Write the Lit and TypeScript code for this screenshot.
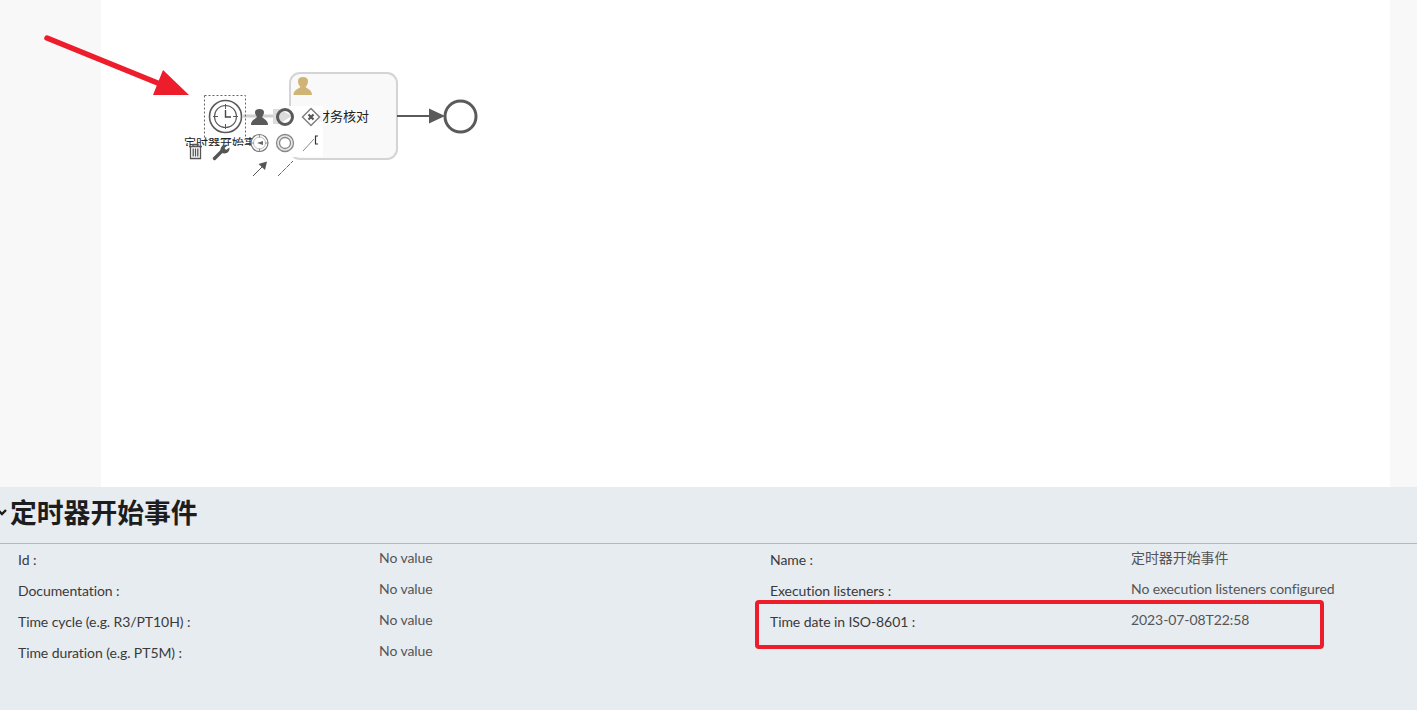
import { LitElement, html, css, svg } from "lit";
import { customElement } from "lit/decorators.js";

const LEFT = [
  ["Id :", "No value"],
  ["Documentation :", "No value"],
  ["Time cycle (e.g. R3/PT10H) :", "No value"],
  ["Time duration (e.g. PT5M) :", "No value"],
];
const RIGHT = [
  ["Name :", "定时器开始事件"],
  ["Execution listeners :", "No execution listeners configured"],
  ["Time date in ISO-8601 :", "2023-07-08T22:58"],
];

@customElement("app-root")
export class AppRoot extends LitElement {
  static styles = css`
    :host {
      display: block;
      position: relative;
      width: 1417px;
      height: 710px;
      overflow: hidden;
      font-family: Lato, "Noto Sans CJK SC", sans-serif;
      background: #f8f8f8;
    }
    .top { height: 487px; padding: 0 27px 0 101px; box-sizing: border-box; }
    .canvas { height: 100%; background: #fff; position: relative; }
    .panel { height: 223px; background: #e7ecf1; box-sizing: border-box; }
    .head {
      height: 57px;
      display: flex;
      align-items: center;
      gap: 2px;
      border-bottom: 1px solid #b3b8c6;
      box-sizing: border-box;
      padding-bottom: 6px;
    }
    .chev { width: 8px; height: 8px; flex: none; }
    h1 {
      margin: 0;
      font: 700 26.8px "Noto Sans CJK SC", Lato, sans-serif;
      line-height: 30px;
      color: #1d1d1d;
    }
    .cols { display: grid; grid-template-columns: 752px 1fr; padding: 0 0 0 18px; }
    .row {
      display: grid;
      grid-template-columns: 361px 1fr;
      height: 31px;
      font-size: 14px;
      letter-spacing: -0.08px;
      color: #4a4a4a;
    }
    .k { padding-top: 7px; line-height: 17px; color: #3a3a3a; }
    .v { padding-top: 5px; line-height: 17px; color: #555; }
    .over { position: absolute; left: 0; top: 0; pointer-events: none; }
    .lbl { font: 13px "Noto Sans CJK SC", sans-serif; fill: #222; }
    .lbl-small { font: 12px "Noto Sans CJK SC", sans-serif; fill: #222; }
  `;

  private rows(list: string[][]) {
    return html`<div class="col">
      ${list.map(([k, v]) => html`<div class="row"><div class="k">${k}</div><div class="v">${v}</div></div>`)}
    </div>`;
  }

  private diagram() {
    return svg`
      <!-- task -->
      <rect x="290" y="73" width="107" height="86" rx="10" fill="#f9f9f9" stroke="#d4d4d4" stroke-width="2"/>
      <path d="M293.500 95 C293.500 90 298 89 300.500 87 C298.500 85 298 83 298 81 C298 78.500 300 77 303 77 C306 77 308 78.500 308 81 C308 83 307.500 85 305.500 87 C308 89 312 90 312 95 Z" fill="#cfb476"/>
      <!-- outgoing flow -->
      <line x1="397" y1="116" x2="432" y2="116" stroke="#5a5a5a" stroke-width="2"/>
      <path d="M429 108.500 L445 116 L429 123.500 Z" fill="#5a5a5a"/>
      <circle cx="460.500" cy="116.500" r="15.500" fill="#fff" stroke="#5a5a5a" stroke-width="3"/>
      <!-- labels below the pads -->
      <text class="lbl-small" x="184" y="148">定时器开始事件</text>
      <text class="lbl" x="317" y="121">财务核对</text>
      <!-- context pad backgrounds -->
      <rect x="184" y="146" width="68" height="16" fill="#fff"/>
      <rect x="252" y="106" width="71" height="51" fill="#fff" fill-opacity="0.93"/>
      <!-- ghost connection -->
      <line x1="243" y1="116" x2="283" y2="116" stroke="#d0d0d0" stroke-width="3"/>
      <path d="M273 109 H279 L292 116 L279 124 H273 Z" fill="#dcdcdc"/>
      <!-- selection -->
      <rect x="204.500" y="95.500" width="41" height="44" fill="none" stroke="#666" stroke-dasharray="2 2"/>
      <!-- timer start -->
      <circle cx="225.500" cy="116.500" r="16" fill="#fff" stroke="#5a5a5a" stroke-width="1.600"/>
      <circle cx="225.500" cy="116.500" r="11" fill="none" stroke="#5a5a5a" stroke-width="1.100"/>
      <path d="M225.500 104 V109 M225.500 124 V129 M213 116.500 H218 M233 116.500 H238" stroke="#5a5a5a" fill="none"/>
      <path d="M225.500 110 V117 H231" stroke="#444" fill="none" stroke-width="1.400"/>
      <!-- palette: user task -->
      <path d="M251 125 C251 120 255 119.500 257 117 C255.500 115 255 113.500 255 112 C255 110 257 109 259.500 109 C262 109 264 110 264 112 C264 113.500 263.500 115 262 117 C264 119.500 268 120 268 125 Z" fill="#5a5a5a"/>
      <!-- end event -->
      <circle cx="285" cy="117" r="7.500" fill="none" stroke="#5a5a5a" stroke-width="3"/>
      <!-- gateway -->
      <path d="M311 108.500 L319.500 117 L311 125.500 L302.500 117 Z" fill="#fff" stroke="#808080" stroke-width="1.500"/>
      <path d="M308.500 114.500 L313.500 119.500 M313.500 114.500 L308.500 119.500" stroke="#555" stroke-width="2.200"/>
      <!-- timer intermediate -->
      <circle cx="259.500" cy="143" r="8.500" fill="#fff" stroke="#777" stroke-width="1.200"/>
      <circle cx="259.500" cy="143" r="6" fill="none" stroke="#aaa" stroke-width="0.800"/>
      <path d="M259.500 134.500 V137.500 M259.500 148.500 V151.500 M251 143 H254 M265 143 H268" stroke="#888" stroke-width="0.900" fill="none"/>
      <path d="M257 143 L263 141 V145 Z" fill="#666"/>
      <!-- intermediate -->
      <circle cx="285" cy="143" r="8.500" fill="#e6e6e6" stroke="#888" stroke-width="1.300"/>
      <circle cx="285" cy="143" r="5.500" fill="#fff" stroke="#888" stroke-width="1.300"/>
      <!-- annotation line -->
      <path d="M303 151 L314 139" stroke="#888" fill="none"/>
      <path d="M318 136 H315.500 V144 H318" stroke="#333" fill="none" stroke-width="1.200"/>
      <!-- trash -->
      <path d="M189 146.500 H202 M193 146 V144.500 H198 V146" stroke="#555" stroke-width="1.300" fill="none"/>
      <path d="M190.500 147 V158.500 H200.500 V147 M193.200 148.500 V156.500 M195.500 148.500 V156.500 M197.800 148.500 V156.500" stroke="#555" stroke-width="1.300" fill="none"/>
      <!-- wrench -->
      <path d="M214.500 158.500 L222 151" stroke="#555" stroke-width="3.400" stroke-linecap="round"/>
      <path d="M221 152.500 C219 147.500 223 143.500 228 145 L224.500 148 L226 150 L229.500 147.500 C230 152 226 155 221 152.500 Z" fill="#555"/>
      <!-- flow arrow -->
      <path d="M253 176 L263 166" stroke="#555" fill="none"/>
      <path d="M267 161.500 L265 170 L258.500 164 Z" fill="#555"/>
      <!-- dashed association -->
      <path d="M278 176 L293 161" stroke="#666" stroke-dasharray="5 1" fill="none"/>
    `;
  }

  render() {
    return html`
      <div class="top"><div class="canvas"></div></div>
      <div class="panel">
        <div class="head">
          <svg class="chev" viewBox="0 0 8 8"><path d="M-1 3 L2 6 L6 2" fill="none" stroke="#1d1d1d" stroke-width="2.400"/></svg>
          <h1>定时器开始事件</h1>
        </div>
        <div class="cols">${this.rows(LEFT)}${this.rows(RIGHT)}</div>
      </div>
      <svg class="over" width="1417" height="710" viewBox="0 0 1417 710">
        ${this.diagram()}
        <path d="M47 38 L165 86" stroke="#ee1d2b" stroke-width="5.500" stroke-linecap="round" fill="none"/>
        <path d="M163 70 L189 95 L153 95 Z" fill="#ee1d2b"/>
        <rect x="757" y="602" width="565" height="45" rx="2" fill="none" stroke="#ee1d2b" stroke-width="4"/>
      </svg>
    `;
  }
}
